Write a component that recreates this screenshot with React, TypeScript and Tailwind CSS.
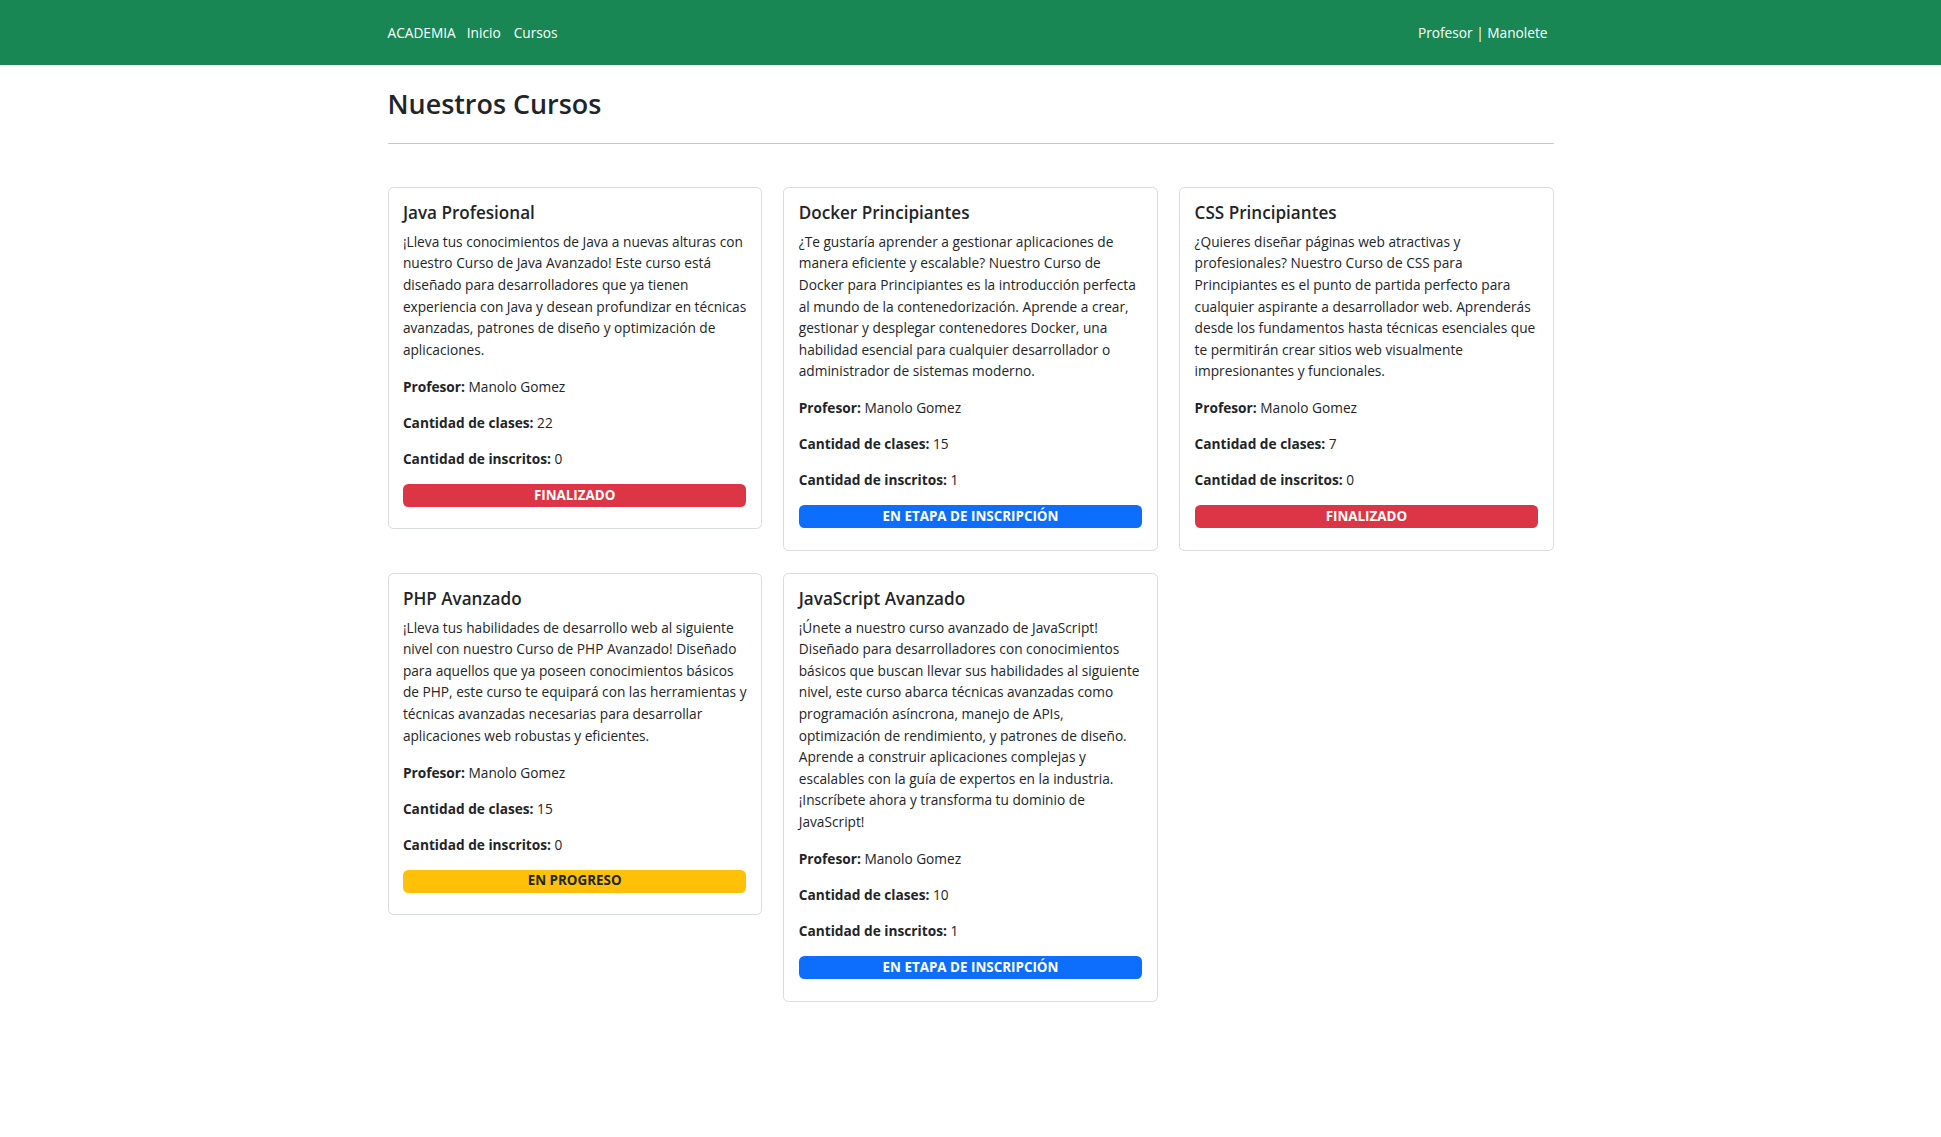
import React from "react";

type Course = {
  title: string;
  lines: string[];
  clases: number;
  inscritos: number;
  status: "fin" | "ins" | "prog";
};

const courses: Course[] = [
  {
    title: "Java Profesional",
    lines: [
      "¡Lleva tus conocimientos de Java a nuevas alturas con",
      "nuestro Curso de Java Avanzado! Este curso está",
      "diseñado para desarrolladores que ya tienen",
      "experiencia con Java y desean profundizar en técnicas",
      "avanzadas, patrones de diseño y optimización de",
      "aplicaciones.",
    ],
    clases: 22,
    inscritos: 0,
    status: "fin",
  },
  {
    title: "Docker Principiantes",
    lines: [
      "¿Te gustaría aprender a gestionar aplicaciones de",
      "manera eficiente y escalable? Nuestro Curso de",
      "Docker para Principiantes es la introducción perfecta",
      "al mundo de la contenedorización. Aprende a crear,",
      "gestionar y desplegar contenedores Docker, una",
      "habilidad esencial para cualquier desarrollador o",
      "administrador de sistemas moderno.",
    ],
    clases: 15,
    inscritos: 1,
    status: "ins",
  },
  {
    title: "CSS Principiantes",
    lines: [
      "¿Quieres diseñar páginas web atractivas y",
      "profesionales? Nuestro Curso de CSS para",
      "Principiantes es el punto de partida perfecto para",
      "cualquier aspirante a desarrollador web. Aprenderás",
      "desde los fundamentos hasta técnicas esenciales que",
      "te permitirán crear sitios web visualmente",
      "impresionantes y funcionales.",
    ],
    clases: 7,
    inscritos: 0,
    status: "fin",
  },
  {
    title: "PHP Avanzado",
    lines: [
      "¡Lleva tus habilidades de desarrollo web al siguiente",
      "nivel con nuestro Curso de PHP Avanzado! Diseñado",
      "para aquellos que ya poseen conocimientos básicos",
      "de PHP, este curso te equipará con las herramientas y",
      "técnicas avanzadas necesarias para desarrollar",
      "aplicaciones web robustas y eficientes.",
    ],
    clases: 15,
    inscritos: 0,
    status: "prog",
  },
  {
    title: "JavaScript Avanzado",
    lines: [
      "¡Únete a nuestro curso avanzado de JavaScript!",
      "Diseñado para desarrolladores con conocimientos",
      "básicos que buscan llevar sus habilidades al siguiente",
      "nivel, este curso abarca técnicas avanzadas como",
      "programación asíncrona, manejo de APIs,",
      "optimización de rendimiento, y patrones de diseño.",
      "Aprende a construir aplicaciones complejas y",
      "escalables con la guía de expertos en la industria.",
      "¡Inscríbete ahora y transforma tu dominio de",
      "JavaScript!",
    ],
    clases: 10,
    inscritos: 1,
    status: "ins",
  },
];

function Badge({ status }: { status: Course["status"] }) {
  if (status === "fin")
    return (
      <div className="flex h-[23px] w-full items-center justify-center rounded-[5.4px] bg-[#dc3545] text-[13.4px] font-bold leading-none text-white">
        FINALIZADO
      </div>
    );
  if (status === "ins")
    return (
      <div className="flex h-[23px] w-full items-center justify-center rounded-[5.4px] bg-[#0d6efd] text-[13.4px] font-bold leading-none text-white">
        EN ETAPA DE INSCRIPCIÓN
      </div>
    );
  return (
    <div className="flex h-[23px] w-full items-center justify-center rounded-[5.4px] bg-[#ffc107] text-[13.4px] font-bold leading-none text-[#212529]">
      EN PROGRESO
    </div>
  );
}

function Card({ c }: { c: Course }) {
  return (
    <div className="rounded-[5.4px] border border-[#dadbdc] bg-white p-[14.4px]">
      <h5 className="mb-[7.2px] text-[17.1px] font-semibold leading-[21.6px] text-[#212529]">
        {c.title}
      </h5>
      <p className="mb-[15.4px]">
        {c.lines.map((l, i) => (
          <span key={i} className="block whitespace-nowrap">
            {l}
          </span>
        ))}
      </p>
      <p className="mb-[14.4px]">
        <strong className="font-bold">Profesor:</strong> Manolo Gomez
      </p>
      <p className="mb-[14.4px]">
        <strong className="font-bold">Cantidad de clases:</strong> {c.clases}
      </p>
      <p className="mb-[14.4px]">
        <strong className="font-bold">Cantidad de inscritos:</strong> {c.inscritos}
      </p>
      <div className="mb-[7.2px]">
        <Badge status={c.status} />
      </div>
    </div>
  );
}

export default function App() {
  return (
    <div
      className="min-h-[1137px] bg-white text-[13.7px] leading-[21.6px] text-[#212529]"
      style={{ fontFamily: '"Open Sans", "Noto Sans", sans-serif' }}
    >
      <nav className="h-[65px] bg-[#198754]">
        <div className="mx-auto flex h-full w-[1166px] items-center justify-between text-white">
          <div className="flex items-center">
            <span className="mr-[11px]">ACADEMIA</span>
            <span className="mr-[13px]">Inicio</span>
            <span>Cursos</span>
          </div>
          <div className="pr-[6px]">Profesor | Manolete</div>
        </div>
      </nav>
      <main className="mx-auto w-[1166px]">
        <h2 className="mt-[21.5px] text-[26.9px] font-semibold leading-[34.6px] text-[#212529]">
          Nuestros Cursos
        </h2>
        <div className="mt-[21.6px] border-t border-[#c8c9ca]" />
        <div className="mt-[43px] grid grid-cols-3 items-start gap-[21.6px]">
          {courses.map((c) => (
            <Card key={c.title} c={c} />
          ))}
        </div>
      </main>
    </div>
  );
}
